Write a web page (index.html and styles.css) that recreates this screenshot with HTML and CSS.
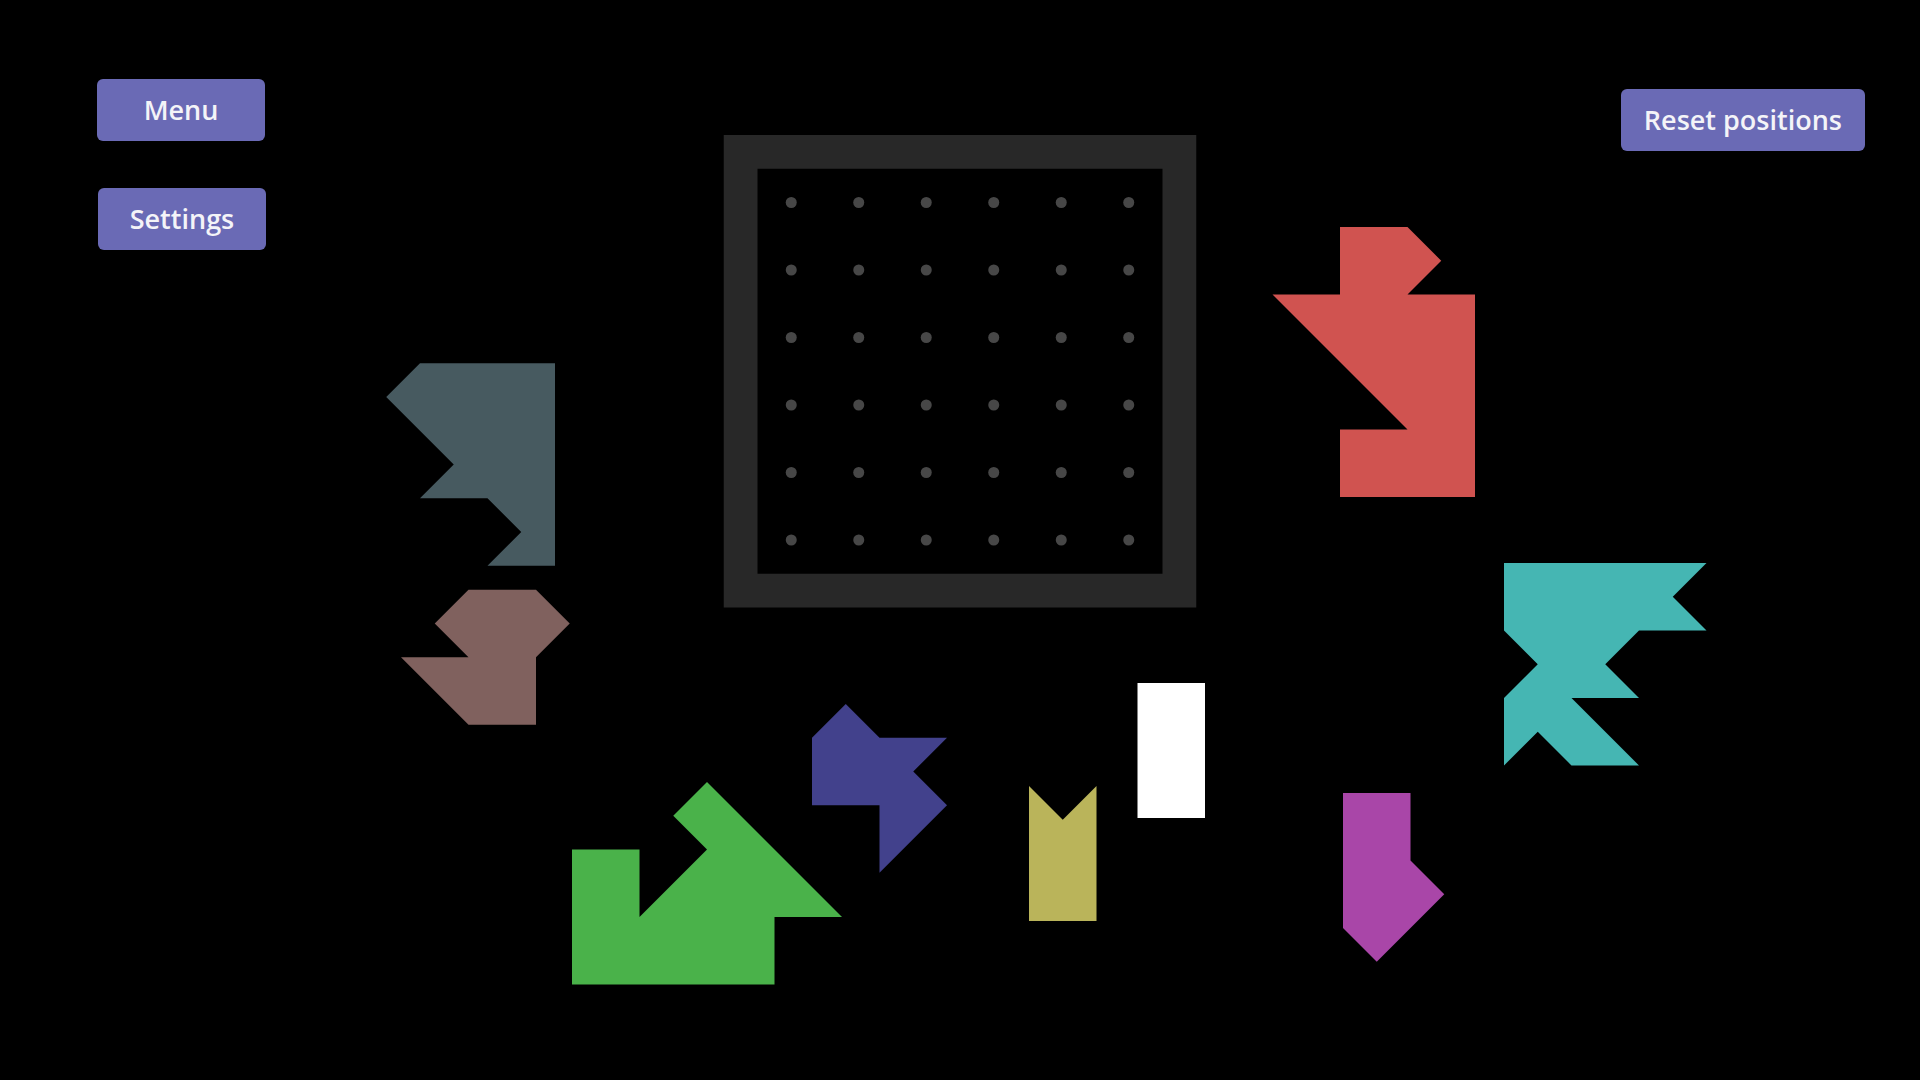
FILE: index.html
```html
<!DOCTYPE html>
<html lang="en">
<head>
<meta charset="utf-8">
<title>Puzzle</title>
<link rel="stylesheet" href="styles.css">
</head>
<body>
<div class="stage">
  <svg class="canvas" width="1920" height="1080" viewBox="0 0 1920 1080" xmlns="http://www.w3.org/2000/svg">
    <g class="board">
      <rect x="723.75" y="135" width="472.5" height="472.5" fill="#282828"/>
      <rect x="757.5" y="168.75" width="405" height="405" fill="#000"/>
      <g fill="#474747">
        <circle cx="791.25" cy="202.5" r="5.5"/><circle cx="858.75" cy="202.5" r="5.5"/><circle cx="926.25" cy="202.5" r="5.5"/><circle cx="993.75" cy="202.5" r="5.5"/><circle cx="1061.25" cy="202.5" r="5.5"/><circle cx="1128.75" cy="202.5" r="5.5"/>
        <circle cx="791.25" cy="270" r="5.5"/><circle cx="858.75" cy="270" r="5.5"/><circle cx="926.25" cy="270" r="5.5"/><circle cx="993.75" cy="270" r="5.5"/><circle cx="1061.25" cy="270" r="5.5"/><circle cx="1128.75" cy="270" r="5.5"/>
        <circle cx="791.25" cy="337.5" r="5.5"/><circle cx="858.75" cy="337.5" r="5.5"/><circle cx="926.25" cy="337.5" r="5.5"/><circle cx="993.75" cy="337.5" r="5.5"/><circle cx="1061.25" cy="337.5" r="5.5"/><circle cx="1128.75" cy="337.5" r="5.5"/>
        <circle cx="791.25" cy="405" r="5.5"/><circle cx="858.75" cy="405" r="5.5"/><circle cx="926.25" cy="405" r="5.5"/><circle cx="993.75" cy="405" r="5.5"/><circle cx="1061.25" cy="405" r="5.5"/><circle cx="1128.75" cy="405" r="5.5"/>
        <circle cx="791.25" cy="472.5" r="5.5"/><circle cx="858.75" cy="472.5" r="5.5"/><circle cx="926.25" cy="472.5" r="5.5"/><circle cx="993.75" cy="472.5" r="5.5"/><circle cx="1061.25" cy="472.5" r="5.5"/><circle cx="1128.75" cy="472.5" r="5.5"/>
        <circle cx="791.25" cy="540" r="5.5"/><circle cx="858.75" cy="540" r="5.5"/><circle cx="926.25" cy="540" r="5.5"/><circle cx="993.75" cy="540" r="5.5"/><circle cx="1061.25" cy="540" r="5.5"/><circle cx="1128.75" cy="540" r="5.5"/>
      </g>
    </g>
    <!-- slate -->
    <polygon transform="translate(386.25 363.25) scale(67.5)" fill="#475a60"
      points="0.5,0 2.5,0 2.5,3 1.5,3 2,2.5 1.5,2 0.5,2 1,1.5 0,0.5"/>
    <!-- brown -->
    <polygon transform="translate(401 589.75) scale(67.5)" fill="#80615e"
      points="1,0 2,0 2.5,0.5 2,1 2,2 1,2 0,1 1,1 0.5,0.5"/>
    <!-- red -->
    <polygon transform="translate(1272.5 227) scale(67.5)" fill="#d05350"
      points="1,0 2,0 2.5,0.5 2,1 3,1 3,4 1,4 1,3 2,3 0,1 1,1"/>
    <!-- teal -->
    <polygon transform="translate(1504 563) scale(67.5)" fill="#45b6b3"
      points="0,0 3,0 2.5,0.5 3,1 2,1 1.5,1.5 2,2 1,2 2,3 1,3 0.5,2.5 0,3 0,2 0.5,1.5 0,1"/>
    <!-- green -->
    <polygon transform="translate(572 782) scale(67.5)" fill="#4ab24a"
      points="0,1 1,1 1,2 2,1 1.5,0.5 2,0 4,2 3,2 3,3 0,3"/>
    <!-- navy -->
    <polygon transform="translate(812 704) scale(67.5)" fill="#42418c"
      points="0.5,0 1,0.5 2,0.5 1.5,1 2,1.5 1,2.5 1,1.5 0,1.5 0,0.5"/>
    <!-- olive -->
    <polygon transform="translate(1029 786) scale(67.5)" fill="#bab45a"
      points="0,0 0.5,0.5 1,0 1,2 0,2"/>
    <!-- white -->
    <rect x="1137.5" y="683" width="67.5" height="135" fill="#ffffff"/>
    <!-- purple -->
    <polygon transform="translate(1343 793) scale(67.5)" fill="#a946a8"
      points="0,0 1,0 1,1 1.5,1.5 0.5,2.5 0,2"/>
  </svg>

  <div class="toolbar">
    <div class="toolbar-left">
      <button class="btn" type="button">Menu</button>
      <button class="btn btn-settings" type="button">Settings</button>
    </div>
    <div class="toolbar-right">
      <button class="btn" type="button">Reset positions</button>
    </div>
  </div>
</div>
</body>
</html>
```

FILE: styles.css
```css
html, body {
  margin: 0;
  padding: 0;
  background: #000;
}

body {
  font-family: "Open Sans", "Noto Sans", sans-serif;
  overflow: hidden;
}

.stage {
  position: relative;
  width: 1920px;
  height: 1080px;
  background: #000;
}

.canvas {
  position: absolute;
  left: 0;
  top: 0;
  display: block;
}

.toolbar {
  position: relative;
  display: flex;
  justify-content: space-between;
  align-items: flex-start;
  padding: 79px 55px 0 97px;
}

.toolbar-left {
  display: flex;
  flex-direction: column;
  align-items: flex-start;
  gap: 47px;
}

.btn-settings {
  margin-left: 1px;
}

.toolbar-right {
  margin-top: 10px;
}

.btn {
  height: 62px;
  min-width: 168px;
  padding: 0 23px;
  border: none;
  border-radius: 6px;
  background: #6a6ab5;
  color: #f4f4f8;
  font-family: "Open Sans", "Noto Sans", sans-serif;
  font-weight: 600;
  font-size: 27px;
  line-height: 62px;
  cursor: pointer;
}
```
